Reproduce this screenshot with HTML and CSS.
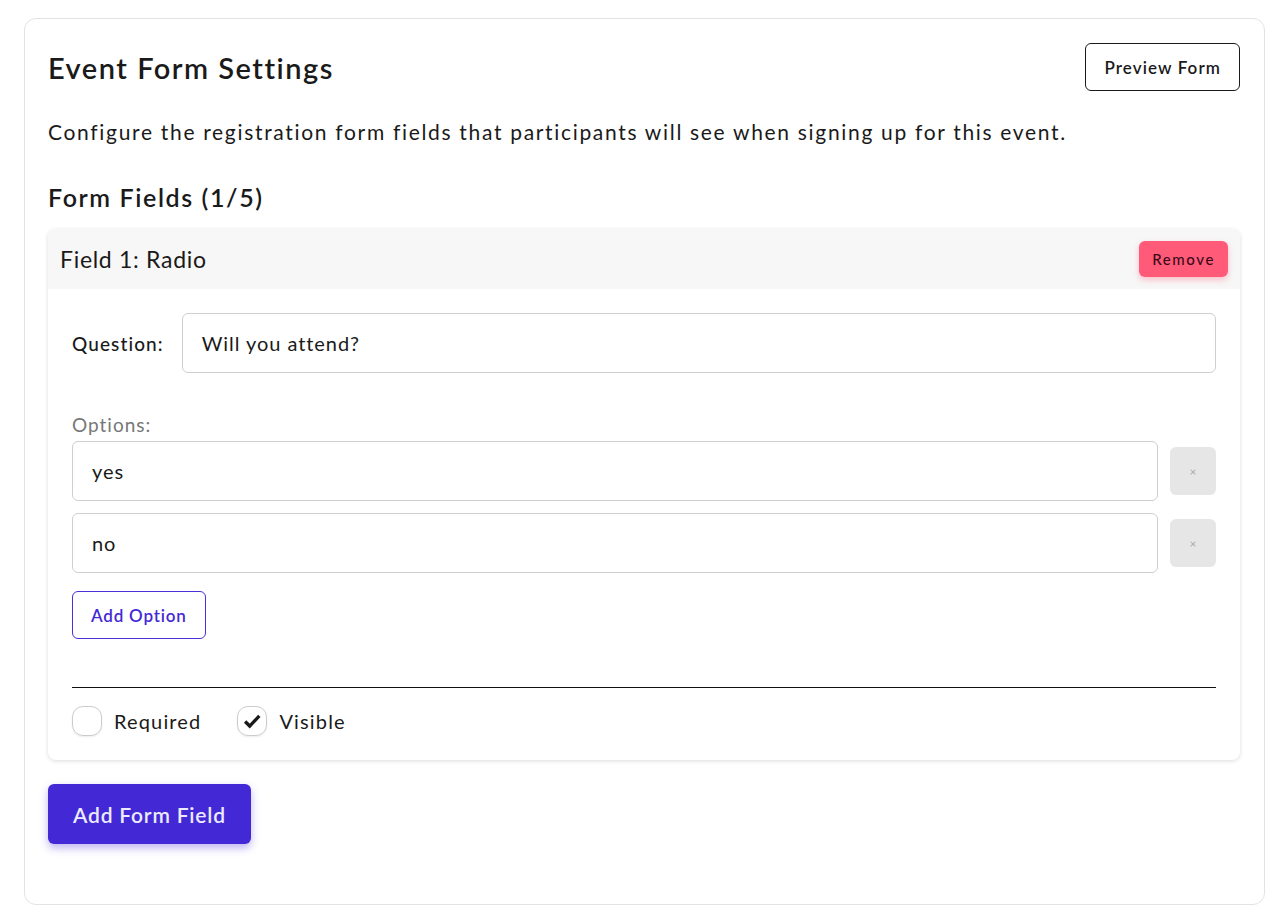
FILE: index.html
```html
<!DOCTYPE html>
<html lang="en">
<head>
<meta charset="utf-8">
<title>Event Form Settings</title>
<link rel="stylesheet" href="styles.css">
</head>
<body>
<div class="card">
  <div class="head">
    <h1 class="title">Event Form Settings</h1>
    <button class="btn-outline">Preview Form</button>
  </div>
  <p class="desc">Configure the registration form fields that participants will see when signing up for this event.</p>
  <h2 class="subtitle">Form Fields (1/5)</h2>

  <div class="field">
    <div class="field-head">
      <span class="field-name">Field 1: Radio</span>
      <button class="btn-remove">Remove</button>
    </div>
    <div class="field-body">
      <div class="question-row">
        <label class="q-label">Question:</label>
        <div class="input">Will you attend?</div>
      </div>
      <div class="options">
        <div class="opt-label">Options:</div>
        <div class="opt-row">
          <div class="input">yes</div>
          <button class="btn-x">×</button>
        </div>
        <div class="opt-row">
          <div class="input">no</div>
          <button class="btn-x">×</button>
        </div>
        <button class="btn-add-option">Add Option</button>
      </div>
      <div class="divider"></div>
      <div class="checks">
        <label class="check"><span class="box"></span>Required</label>
        <label class="check"><span class="box checked"><svg viewBox="0 0 24 24" width="22" height="22"><path d="M4.5 12.5l5 5L20 6.5" fill="none" stroke="#1a1a1a" stroke-width="3.6" stroke-linecap="butt" stroke-linejoin="miter"/></svg></span>Visible</label>
      </div>
    </div>
  </div>

  <button class="btn-primary">Add Form Field</button>
</div>
</body>
</html>
```

FILE: styles.css
```css
* { box-sizing: border-box; }
html, body { margin: 0; padding: 0; background: #fff; }
body {
  font-family: "Lato", "Noto Sans", sans-serif;
  color: #1a1a1a;
  padding: 18px 19px 10px 24px;
}
button { font-family: inherit; cursor: pointer; }

.card {
  border: 1px solid #e3e3e3;
  border-radius: 12px;
  padding: 24px 24px 60px 23px;
  min-height: 887px;
}
.head {
  display: flex;
  align-items: center;
  justify-content: space-between;
  height: 48px;
}
.title {
  margin: 0;
  font-size: 29px;
  font-weight: 600;
  letter-spacing: 1.5px;
}
.btn-outline {
  height: 48px;
  padding: 0 18px;
  background: #fff;
  border: 1px solid #1a1a1a;
  border-radius: 6px;
  font-size: 17px;
  font-weight: 600;
  letter-spacing: 1.1px;
  color: #1a1a1a;
}
.desc {
  margin: 25px 0 0;
  font-size: 21px;
  line-height: 32px;
  letter-spacing: 1.68px;
}
.subtitle {
  margin: 33px 0 0;
  font-size: 25px;
  font-weight: 600;
  line-height: 32px;
  letter-spacing: 1.6px;
}
.field {
  margin-top: 16px;
  border-radius: 8px;
  box-shadow: 0 1px 4px rgba(0,0,0,0.14);
  overflow: hidden;
}
.field-head {
  background: #f7f7f7;
  height: 60px;
  display: flex;
  align-items: center;
  justify-content: space-between;
  padding: 0 12px;
}
.field-name { font-size: 23px; letter-spacing: 0.7px; }
.btn-remove {
  height: 36px;
  padding: 0 13px;
  background: #ff5a78;
  color: #3a0a18;
  border: none;
  border-radius: 6px;
  font-size: 15px;
  font-weight: 500;
  letter-spacing: 1.6px;
  box-shadow: 0 3px 6px rgba(255,90,120,0.35);
}
.field-body {
  padding: 24px 24px 24px;
}
.question-row {
  display: flex;
  align-items: center;
  gap: 18px;
}
.q-label { font-size: 19px; font-weight: 500; letter-spacing: 1.1px; }
.input {
  flex: 1;
  height: 60px;
  border: 1px solid #cfcfcf;
  border-radius: 6px;
  display: flex;
  align-items: center;
  padding: 0 19px;
  font-size: 20px;
  letter-spacing: 0.95px;
  color: #1a1a1a;
}
.options { margin-top: 40px; }
.opt-label { color: #777; font-size: 19px; line-height: 24px; margin-bottom: 4px; letter-spacing: 1px; }
.opt-row {
  display: flex;
  align-items: center;
  gap: 12px;
  margin-bottom: 12px;
}
.btn-x {
  width: 46px;
  height: 48px;
  border: none;
  border-radius: 6px;
  background: #e6e6e6;
  color: #aaa;
  font-size: 12px;
  padding: 0;
}
.btn-add-option {
  margin-top: 6px;
  height: 48px;
  padding: 0 18px;
  background: #fff;
  border: 1px solid #4a30d8;
  border-radius: 6px;
  color: #4329d6;
  font-size: 17px;
  font-weight: 600;
  letter-spacing: 0.8px;
}
.divider {
  margin-top: 48px;
  border-top: 1px solid #111;
}
.checks {
  display: flex;
  align-items: center;
  gap: 36px;
  margin-top: 18px;
}
.check {
  display: flex;
  align-items: center;
  gap: 12px;
  font-size: 20px;
  letter-spacing: 1.15px;
}
.box {
  width: 30px;
  height: 30px;
  border: 1px solid #ccc;
  border-radius: 11px;
  display: flex;
  align-items: center;
  justify-content: center;
  box-shadow: 0 1px 2px rgba(0,0,0,0.08);
}
.btn-primary {
  margin-top: 24px;
  height: 60px;
  padding: 0 25px;
  background: #4329d6;
  color: #eceaff;
  border: none;
  border-radius: 6px;
  font-size: 21px;
  font-weight: 600;
  letter-spacing: 0.8px;
  box-shadow: 0 4px 8px rgba(67,41,214,0.35);
}
```
